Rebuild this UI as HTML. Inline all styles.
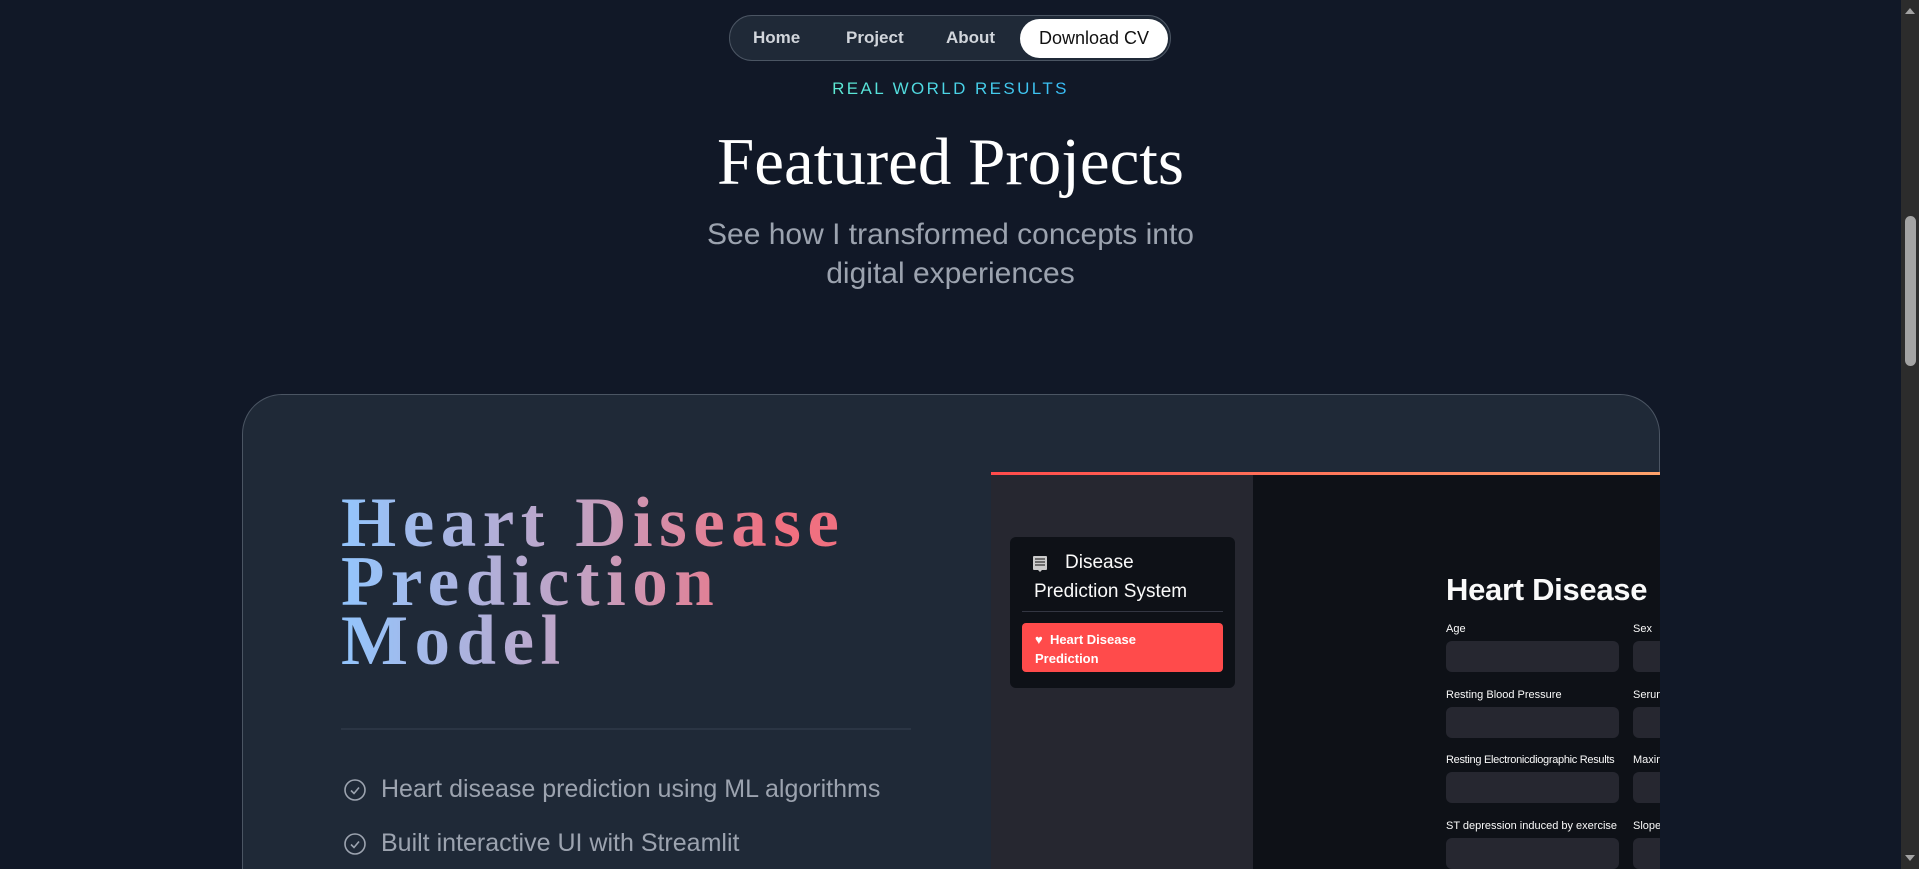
<!DOCTYPE html>
<html><head><meta charset="utf-8"><style>
*{margin:0;padding:0;box-sizing:border-box}
html,body{width:1919px;height:869px;overflow:hidden;background:#111827;font-family:"Liberation Sans",sans-serif}
#wrap{position:relative;width:1919px;height:869px;overflow:hidden}
.abs{position:absolute}
.nav{left:729px;top:15px;width:442px;height:46px;border:1px solid #4b5563;border-radius:23px;background:#1f2937}
.nav span{position:absolute;top:12px;font-size:17px;font-weight:bold;color:#d1d5db}
.dl{left:1020px;top:19px;width:148px;height:39px;border-radius:20px;background:#fff;color:#111;font-size:18px;text-align:center;line-height:39px}
.tag{left:0;width:1901px;top:79px;text-align:center;font-size:17px;letter-spacing:2.4px}
.tag b{font-weight:normal;background:linear-gradient(90deg,#5eead4,#38bdf8);-webkit-background-clip:text;color:transparent}
.h1{left:0;width:1901px;top:124px;text-align:center;font-family:"Liberation Serif",serif;font-size:67px;color:#fff}
.sub{left:0;width:1901px;top:215px;text-align:center;font-size:30px;line-height:39px;color:#9ca3af}
.card{left:242px;top:394px;width:1418px;height:475px;border:1px solid #4b5563;border-bottom:none;border-radius:40px 40px 0 0;background:#1f2937}
.title{left:341px;top:494px;font-family:"Liberation Serif",serif;font-weight:bold;font-size:71px;line-height:59px;letter-spacing:6.5px;background:linear-gradient(90deg,#93c5fd 0%,#c4a0c0 40%,#f07080 70%);-webkit-background-clip:text;color:transparent;width:620px}
.li{left:343px;font-size:25px;color:#9ca3af}
.li svg{position:absolute;left:0;top:3px}
.li span{position:absolute;left:38px;top:0;white-space:nowrap}
.lbl{font-size:11px;color:#fafafa;font-family:"Liberation Sans",sans-serif}
.inp{background:#262730;border-radius:6px;height:31px}
</style></head><body><div id="wrap">
<div class="abs nav">
<span style="left:23px">Home</span><span style="left:116px">Project</span><span style="left:216px">About</span>
</div>
<div class="abs dl">Download CV</div>
<div class="abs tag"><b>REAL WORLD RESULTS</b></div>
<div class="abs h1">Featured Projects</div>
<div class="abs sub">See how I transformed concepts into<br>digital experiences</div>
<div class="abs card"></div>
<div class="abs title">Heart Disease Prediction Model</div>
<div class="abs" style="left:341px;top:728px;width:570px;height:2px;background:#2b3544"></div>
<div class="abs li" style="top:775px"><svg width="24" height="24" viewBox="0 0 24 24" fill="none" stroke="#9ca3af" stroke-width="1.6"><circle cx="12" cy="12" r="10"/><path d="M8 12.5l3 3 5-6"/></svg><span>Heart disease prediction using ML algorithms</span></div>
<div class="abs li" style="top:829px"><svg width="24" height="24" viewBox="0 0 24 24" fill="none" stroke="#9ca3af" stroke-width="1.6"><circle cx="12" cy="12" r="10"/><path d="M8 12.5l3 3 5-6"/></svg><span>Built interactive UI with Streamlit</span></div>
<div class="abs" style="left:991px;top:472px;width:669px;height:3px;background:linear-gradient(90deg,#ff4b4b,#ffa36b)"></div>
<div class="abs" style="left:991px;top:475px;width:262px;height:394px;background:#262730"></div>
<div class="abs" style="left:1253px;top:475px;width:407px;height:394px;background:#0e1117;overflow:hidden">
 <div class="abs" style="left:193px;top:97px;font-size:31px;font-weight:bold;color:#fafafa;white-space:nowrap;letter-spacing:-0.3px">Heart Disease</div>
 <div class="abs lbl" style="left:193px;top:148px">Age</div><div class="abs lbl" style="left:380px;top:148px">Sex</div>
 <div class="abs inp" style="left:193px;top:166px;width:173px"></div><div class="abs inp" style="left:380px;top:166px;width:60px"></div>
 <div class="abs lbl" style="left:193px;top:214px">Resting Blood Pressure</div><div class="abs lbl" style="left:380px;top:214px">Serum</div>
 <div class="abs inp" style="left:193px;top:232px;width:173px"></div><div class="abs inp" style="left:380px;top:232px;width:60px"></div>
 <div class="abs lbl" style="left:193px;top:279px;letter-spacing:-0.3px">Resting Electronicdiographic Results</div><div class="abs lbl" style="left:380px;top:279px">Maxim</div>
 <div class="abs inp" style="left:193px;top:297px;width:173px"></div><div class="abs inp" style="left:380px;top:297px;width:60px"></div>
 <div class="abs lbl" style="left:193px;top:345px">ST depression induced by exercise</div><div class="abs lbl" style="left:380px;top:345px">Slope</div>
 <div class="abs inp" style="left:193px;top:363px;width:173px;height:31px"></div><div class="abs inp" style="left:380px;top:363px;width:60px"></div>
</div>
<div class="abs" style="left:1010px;top:537px;width:225px;height:151px;background:#0e1117;border-radius:6px"></div>
<svg class="abs" style="left:1031px;top:555px" width="18" height="18" viewBox="0 0 18 18"><rect x="2" y="1" width="14" height="14" rx="1" fill="#ccc"/><path d="M4 4h10M4 7h10M4 10h10" stroke="#333" stroke-width="1.2"/><path d="M7 15l2 2 2-2" fill="#ccc"/></svg>
<div class="abs" style="left:1065px;top:552px;font-size:19px;color:#fafafa">Disease</div>
<div class="abs" style="left:1034px;top:581px;font-size:19px;color:#fafafa">Prediction System</div>
<div class="abs" style="left:1022px;top:611px;width:201px;height:1px;background:#333642"></div>
<div class="abs" style="left:1022px;top:623px;width:201px;height:49px;background:#ff4b4b;border-radius:4px"></div>
<div class="abs" style="left:1035px;top:630px;font-size:13px;font-weight:bold;color:#fff;line-height:19px">&#9829;&nbsp; Heart Disease<br>Prediction</div>
<div class="abs" style="left:1901px;top:0;width:18px;height:869px;background:#2c2c2c"></div>
<div class="abs" style="left:1905px;top:216px;width:11px;height:150px;border-radius:6px;background:#a3a3a3"></div>
<svg class="abs" style="left:1901px;top:4px" width="18" height="12"><path d="M4 10L9 4l5 6z" fill="#a3a3a3"/></svg>
<svg class="abs" style="left:1901px;top:853px" width="18" height="12"><path d="M4 2l5 6 5-6z" fill="#a3a3a3"/></svg>
</div></body></html>
